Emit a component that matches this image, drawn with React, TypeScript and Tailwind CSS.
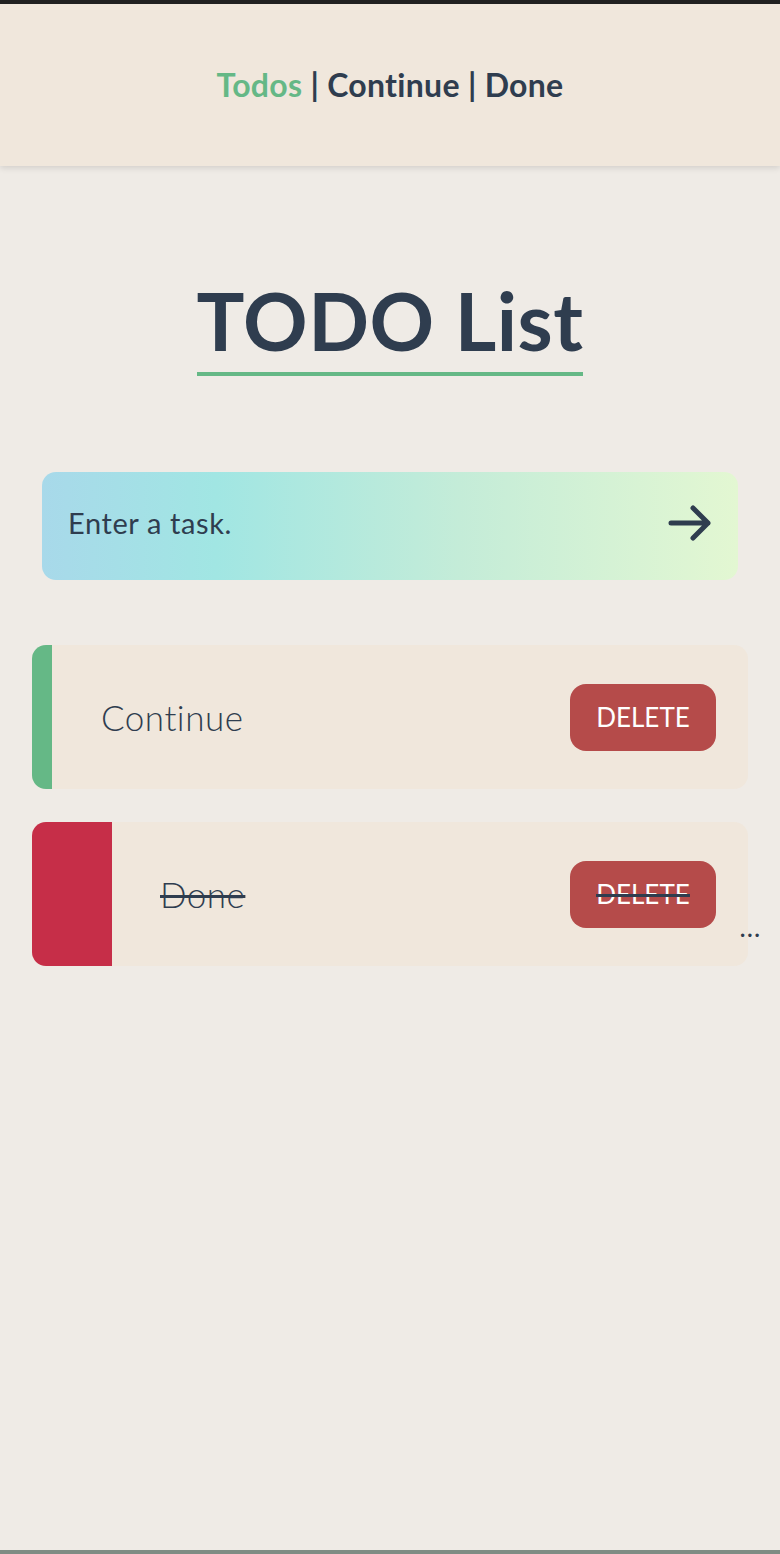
const font = { fontFamily: '"Lato", "Noto Sans", sans-serif' };

const ArrowIcon = () => (
  <svg width="44" height="40" viewBox="0 0 44 40" fill="none">
    <path
      d="M3 20H40M25 5L40 20L25 35"
      stroke="#2f3d4f"
      strokeWidth="5"
      strokeLinecap="round"
      strokeLinejoin="round"
    />
  </svg>
);

const App = () => {
  return (
    <div
      className="relative flex min-h-[1554px] flex-col bg-[#efebe6] text-[#2f3d4f]"
      style={font}
    >
      {/* top bar */}
      <div className="h-[4px] w-full bg-[#222222]" />

      {/* header nav */}
      <header className="flex h-[162px] items-center justify-center bg-[#f0e7dc] shadow-[0_2px_6px_rgba(0,0,0,0.12)]">
        <nav className="text-[32px] font-bold tracking-[0.3px]">
          <span className="text-[#65b886]">Todos</span>
          <span> | </span>
          <span>Continue</span>
          <span> | </span>
          <span>Done</span>
        </nav>
      </header>

      {/* title */}
      <div className="mt-[106px] flex justify-center">
        <h1 className="border-b-[4px] border-[#65b886] pb-[4px] text-[80px] font-bold leading-[96px] tracking-[0.5px]">
          TODO List
        </h1>
      </div>

      {/* input */}
      <div className="mt-[96px] px-[42px]">
        <div className="flex h-[108px] items-center justify-between rounded-[14px] bg-[linear-gradient(90deg,#a8d9ea_0%,#a1e6e3_25%,#c4ecd8_60%,#e3f7d2_100%)] pb-[6px] pl-[26px] pr-[26px]">
          <span className="text-[29px] tracking-[0.6px]">Enter a task.</span>
          <ArrowIcon />
        </div>
      </div>

      {/* list */}
      <div className="mt-[65px] flex flex-col gap-[33px] px-[32px]">
        <div className="flex h-[144px] w-[716px] items-center overflow-hidden rounded-[14px] bg-[#f0e7dc]">
          <div className="h-full w-[20px] bg-[#65b886]" />
          <span className="ml-[49px] flex-1 text-[35px] font-light tracking-[0.5px]">Continue</span>
          <button className="mr-[32px] h-[67px] w-[146px] rounded-[16px] bg-[#b54b4a] text-[26px] text-white">
            DELETE
          </button>
        </div>

        <div className="relative">
          <div className="flex h-[144px] w-[716px] items-center overflow-hidden rounded-[14px] bg-[#f0e7dc] line-through decoration-[#2f3d4f] decoration-[3px]">
            <div className="h-full w-[80px] bg-[#c62e48]" />
            <span className="ml-[48px] flex-1 text-[35px] font-light tracking-[0.5px]">Done</span>
            <button className="mr-[32px] h-[67px] w-[146px] rounded-[16px] bg-[#b54b4a] text-[26px] text-white line-through decoration-[#2f3d4f] decoration-[3px]">
              DELETE
            </button>
          </div>
          <span className="absolute left-[708px] top-[96px] text-[22px] font-bold leading-none tracking-[2px] text-[#2f3d4f]">
            ...
          </span>
        </div>
      </div>

      {/* bottom bar */}
      <div className="absolute bottom-0 left-0 h-[4px] w-full bg-[#7f8c84]" />
    </div>
  );
};

export default App;
